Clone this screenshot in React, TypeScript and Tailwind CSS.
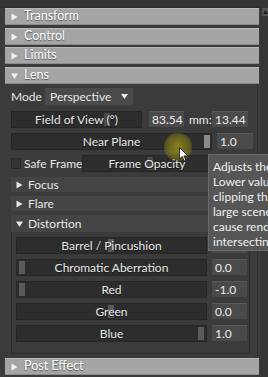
import React from "react";

const font = { fontFamily: "Lato, 'Open Sans', sans-serif" };

function Tri({ open, light }: { open?: boolean; light?: boolean }) {
  return (
    <svg width="7" height="8" viewBox="0 0 7 8" className="shrink-0">
      {open ? (
        <polygon points="0,1.5 7,1.5 3.5,7" fill={light ? "#f2f2f2" : "#e6e6e6"} />
      ) : (
        <polygon points="0.5,0.5 6.5,4 0.5,7.5" fill={light ? "#f2f2f2" : "#e6e6e6"} />
      )}
    </svg>
  );
}

function Header({ label, open }: { label: string; open?: boolean }) {
  return (
    <div className="ml-[5px] w-[254px] h-[17px] flex items-center gap-[6px] pl-[6px] bg-[#a5a5a5] border-t border-t-[#b8b8b8] border-b border-b-[#8c8c8c] text-[12.5px] text-white [text-shadow:0_1px_1px_#555]">
      <Tri open={open} light />
      <span className="leading-none">{label}</span>
    </div>
  );
}

function Slider({
  label,
  w,
  thumb,
  thumbColor = "bg-[#5a5a5a]",
}: {
  label: string;
  w: string;
  thumb?: string;
  thumbColor?: string;
}) {
  return (
    <div className={`${w} h-[17px] relative bg-[#2d2d2d] border border-[#262626] flex items-center justify-center text-[12px] text-[#e8e8e8] [text-shadow:0_1px_1px_#1a1a1a]`}>
      {thumb && <div className={`absolute top-[1px] bottom-[1px] w-[6px] ${thumb} ${thumbColor}`} />}
      <span className="relative leading-none whitespace-nowrap">{label}</span>
    </div>
  );
}

function Value({ v, w = "w-[36px]" }: { v: string; w?: string }) {
  return (
    <div className={`${w} h-[17px] bg-[#4a4a4a] border-t border-t-[#585858] border-b border-b-[#3a3a3a] flex items-center pl-[3px] text-[12px] text-[#ececec] leading-none`}>
      {v}
    </div>
  );
}

function SubHeader({ label, open, h = "h-[15px]" }: { label: string; open?: boolean; h?: string }) {
  return (
    <div className={`${h} w-[239px] bg-[#444444] flex items-center gap-[5px] pl-[5px] text-[12px] text-[#e6e6e6]`}>
      <Tri open={open} />
      <span className="leading-none">{label}</span>
    </div>
  );
}

export default function App() {
  const dist = [
    { label: "Barrel / Pincushion", v: "", thumb: "left-[91px]" },
    { label: "Chromatic Aberration", v: "0.0", thumb: "left-[2px]" },
    { label: "Red", v: "-1.0", thumb: "left-[2px]" },
    { label: "Green", v: "0.0", thumb: "left-[91px]" },
    { label: "Blue", v: "1.0", thumb: "right-[2px]" },
  ];

  return (
    <div className="w-[268px] h-[377px] bg-[#3b3b3b] overflow-hidden relative flex select-none" style={font}>
      <div className="w-[260px] flex flex-col">
        <div className="h-[8px] bg-[#343434] border-b border-b-[#2c2c2c]" />
        <Header label="Transform" />
        <div className="h-[3px]" />
        <Header label="Control" />
        <div className="h-[2px]" />
        <Header label="Limits" />
        <div className="h-[3px]" />
        <Header label="Lens" open />

        <div className="ml-[5px] w-[253px] border-r border-r-[#2e2e2e] pl-[6px] pt-[4px] flex flex-col">
          <div className="h-[17px] flex items-center text-[12px] text-[#e6e6e6]">
            <span className="w-[34px] leading-none">Mode</span>
            <div className="w-[88px] h-[17px] bg-[#4a4a4a] flex items-center pl-[5px] pr-[5px] justify-between">
              <span className="leading-none">Perspective</span>
              <svg width="7" height="5" viewBox="0 0 7 5">
                <polygon points="0,0 7,0 3.5,5" fill="#e6e6e6" />
              </svg>
            </div>
          </div>

          <div className="mt-[6px] h-[17px] flex items-center">
            <Slider label="Field of View (°)" w="w-[131px]" thumb="left-[92px]" thumbColor="bg-[#4a4a4a]" />
            <div className="ml-[7px]">
              <Value v="83.54" w="w-[35px]" />
            </div>
            <span className="ml-[5px] w-[23px] text-[12px] text-[#e6e6e6] leading-none">mm:</span>
            <Value v="13.44" />
          </div>

          <div className="mt-[5px] h-[17px] flex items-center">
            <Slider label="Near Plane" w="w-[201px]" thumb="right-[1px]" thumbColor="bg-[#8a8a8a]" />
            <div className="ml-[5px]">
              <Value v="1.0" />
            </div>
          </div>

          <div className="mt-[5px] h-[17px] flex items-center">
            <div className="w-[10px] h-[11px] bg-[#333333] border border-[#2a2a2a] shrink-0" />
            <span className="ml-[3px] w-[58px] shrink-0 text-[12px] text-[#e6e6e6] leading-none whitespace-nowrap">Safe Frame</span>
            <Slider label="Frame Opacity" w="w-[130px]" thumb="left-[64px]" thumbColor="bg-[#4a4a4a]" />
          </div>

          <div className="mt-[5px]">
            <SubHeader label="Focus" />
          </div>
          <div className="mt-[4px]">
            <SubHeader label="Flare" />
          </div>
          <div className="mt-[4px]">
            <SubHeader label="Distortion" open h="h-[17px]" />
          </div>

          <div className="w-[239px] border-x border-b border-[#2e2e2e] pl-[4px] pt-[5px] pb-[11px] flex flex-col gap-[5px]">
            {dist.map((d) => (
              <div key={d.label} className="h-[17px] flex items-center">
                <Slider label={d.label} w="w-[191px]" thumb={d.thumb} />
                <div className="ml-[5px]">
                  <Value v={d.v} w="w-[35px]" />
                </div>
              </div>
            ))}
          </div>
          <div className="h-[4px]" />
        </div>

        <Header label="Post Effect" />
      </div>

      <div className="w-[8px] bg-[#353535] flex flex-col items-end pt-[8px]">
        <div className="w-[6px] h-[8px] bg-[#555555] flex items-center justify-center">
          <svg width="5" height="4" viewBox="0 0 5 4">
            <polygon points="0,4 5,4 2.5,0" fill="#222" />
          </svg>
        </div>
      </div>

      {/* tooltip */}
      <div className="absolute left-[208px] top-[154px] w-[60px] h-[97px] overflow-hidden bg-[#565656] border border-r-0 border-[#6a6a6a] pl-[4px] pt-[4px] text-[12px] leading-[15px] text-[#f0f0f0] whitespace-nowrap">
        <div>Adjusts the</div>
        <div>Lower values</div>
        <div>clipping that</div>
        <div>large scenes</div>
        <div>cause render</div>
        <div>intersecting</div>
      </div>

      {/* cursor glow */}
      <div className="absolute left-[164px] top-[133px] w-[28px] h-[28px] rounded-full bg-[radial-gradient(circle,rgba(170,160,20,0.75)_0%,rgba(150,140,20,0.5)_55%,rgba(150,140,20,0)_100%)]" />
      <svg className="absolute left-[179px] top-[147px]" width="10" height="15" viewBox="0 0 10 15">
        <path d="M0.5 0.5 L0.5 12 L3.2 9.4 L5.2 14 L6.8 13.3 L4.9 8.9 L8.8 8.9 Z" fill="#fff" stroke="#111" strokeWidth="0.8" />
      </svg>
    </div>
  );
}
